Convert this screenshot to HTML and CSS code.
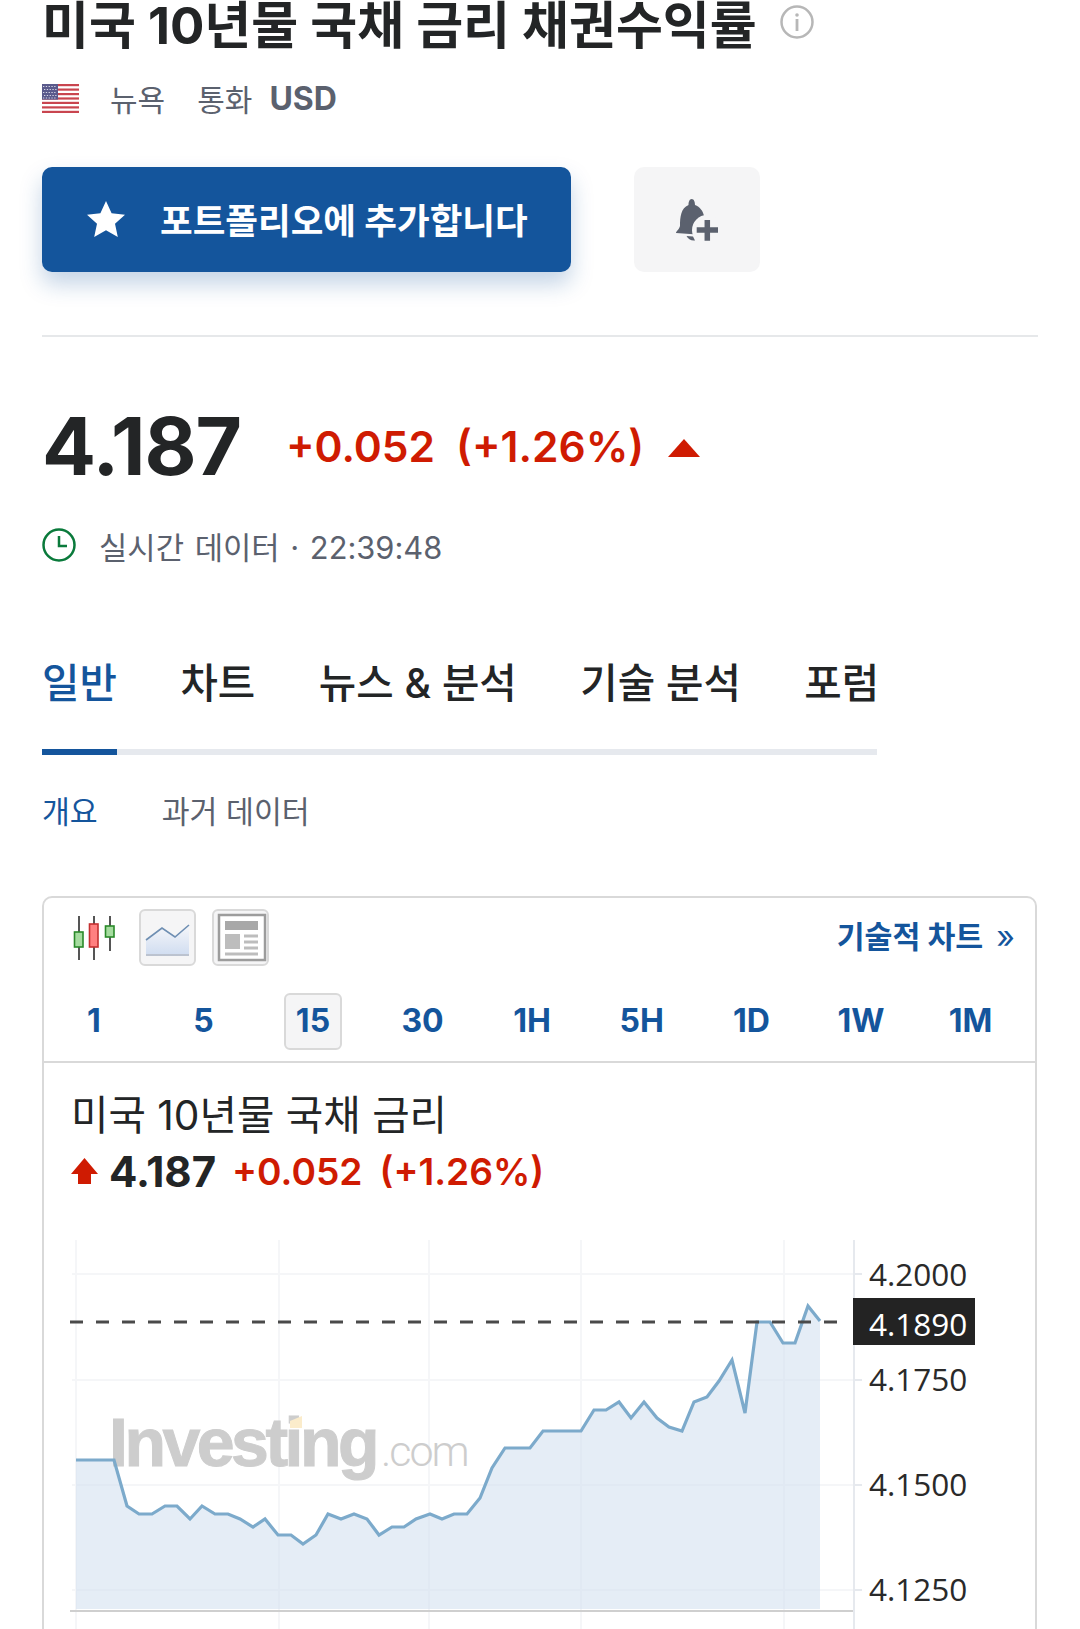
FILE: index.html
```html
<!DOCTYPE html>
<html lang="ko">
<head>
    <meta charset="UTF-8">
    <meta name="viewport" content="width=device-width, initial-scale=1.0">
    <title>미국 10년물 국채 금리 채권수익률</title>
    <link rel="stylesheet" href="styles.css">
</head>
<body>
    <div class="page">
        <div class="title-row">
            <h1>미국 10년물 국채 금리 채권수익률</h1>
            <svg class="info-icon" viewBox="0 0 34 34">
                <circle cx="17" cy="17" r="15.5" fill="none" stroke="#b7b7b7" stroke-width="2.5"/>
                <circle cx="17" cy="10" r="1.8" fill="#b7b7b7"/>
                <rect x="15.6" y="14" width="2.8" height="12" fill="#b7b7b7"/>
            </svg>
        </div>

        <div class="meta-row">
            <svg class="flag" viewBox="0 0 37 29">
                <rect width="37" height="29" fill="#fff"/>
                <g fill="#c9454f">
                    <rect y="0" width="37" height="2.2"/>
                    <rect y="4.5" width="37" height="2.2"/>
                    <rect y="9" width="37" height="2.2"/>
                    <rect y="13.4" width="37" height="2.2"/>
                    <rect y="17.8" width="37" height="2.2"/>
                    <rect y="22.3" width="37" height="2.2"/>
                    <rect y="26.8" width="37" height="2.2"/>
                </g>
                <rect width="16" height="15.6" fill="#5a5a8c"/>
                <path d="M1 2.5h14M2 5.5h13M1 8.5h14M2 11.5h13M1 14h14" stroke="#d8d8e6" stroke-width="1.2" stroke-dasharray="1.3 1.5"/>
            </svg>
            <span class="meta-city">뉴욕</span>
            <span class="meta-label">통화</span>
            <strong class="meta-currency">USD</strong>
        </div>

        <div class="action-row">
            <button class="add-btn">
                <svg class="star-icon" viewBox="0 0 38 37">
                    <path d="M19 0l5.6 12.2 13.4 1.5-10 9 2.8 13.3L19 29.3 7.2 36l2.8-13.3-10-9 13.4-1.5z" fill="#fff"/>
                </svg>
                <span class="add-label">포트폴리오에 추가합니다</span>
            </button>
            <button class="alert-btn">
                <svg class="bell-icon" viewBox="0 0 42 42">
                    <path d="M15.7 0C18 0 19 3 19 6c5 2 8 6 9 11v19L0 34c0-2 3-3 4-7C4 18 5 9 12.5 6c0-3 1-6 3.200-6z" fill="#5b616e"/>
                    <circle cx="31" cy="31" r="15" fill="#f5f5f6"/>
                    <path d="M10.500 37l6.500.5 2 4c-4 .5-7-1.500-8.500-4.500z" fill="#5b616e"/>
                    <path d="M31.300 21v20.700M20.700 31h21.300" stroke="#5b616e" stroke-width="5.500"/>
                </svg>
            </button>
        </div>

        <hr class="divider">

        <div class="price-row">
            <span class="price">4.187</span>
            <span class="change">+0.052</span>
            <span class="change change-pct">(+1.26%)</span>
            <svg class="up-icon" viewBox="0 0 32 18"><path d="M16 0l16 18H0z" fill="#cf1b02"/></svg>
        </div>

        <div class="time-row">
            <svg class="clock-icon" viewBox="0 0 34 34">
                <circle cx="17" cy="17" r="15.5" fill="none" stroke="#0a7a3b" stroke-width="2.5"/>
                <path d="M17 8v10h8" fill="none" stroke="#0a7a3b" stroke-width="2.5"/>
            </svg>
            <span>실시간 데이터 · 22:39:48</span>
        </div>

        <nav class="tabs">
            <a class="tab active">일반</a>
            <a class="tab">차트</a>
            <a class="tab">뉴스 &amp; 분석</a>
            <a class="tab">기술 분석</a>
            <a class="tab">포럼</a>
        </nav>

        <div class="sub-tabs">
            <a class="sub-tab active">개요</a>
            <a class="sub-tab">과거 데이터</a>
        </div>

        <section class="chart-card">
            <div class="chart-tools">
                <div class="tool-group">
                    <svg class="candle-icon" viewBox="0 0 43 44">
                        <path d="M6 0v44M21 0v44M37 0v35" stroke="#555" stroke-width="2"/>
                        <rect x="1.5" y="16" width="8.5" height="15" fill="#a5dc9f" stroke="#2a8a2a" stroke-width="1.6"/>
                        <rect x="16.5" y="8" width="8.5" height="23" fill="#ff8080" stroke="#c43030" stroke-width="1.6"/>
                        <rect x="32.5" y="10" width="8.5" height="11" fill="#a5dc9f" stroke="#2a8a2a" stroke-width="1.6"/>
                    </svg>
                    <span class="tool-btn">
                        <svg viewBox="0 0 53 53">
                            <defs>
                                <linearGradient id="toolFill" x1="0" y1="0" x2="0" y2="1">
                                    <stop offset="0" stop-color="#f6f7fa"/>
                                    <stop offset="1" stop-color="#cfdcf0"/>
                                </linearGradient>
                            </defs>
                            <path d="M5 29l16-12 13 9 14-12v31H5z" fill="url(#toolFill)"/>
                            <path d="M5 29l16-12 13 9 14-12" fill="none" stroke="#6f8fb3" stroke-width="1.6"/>
                            <path d="M5 44h43" stroke="#b4bac4" stroke-width="1.6"/>
                        </svg>
                    </span>
                    <span class="tool-btn">
                        <svg viewBox="0 0 53 53">
                            <rect x="5" y="4" width="46" height="45" fill="#fff" stroke="#9c9c9c" stroke-width="2.5"/>
                            <rect x="11" y="10" width="33" height="9" fill="#a8a8a8"/>
                            <rect x="11" y="23" width="15" height="15" fill="#bdbdbd"/>
                            <path d="M30 25h14M30 31h14M30 37h14M11 43h33" stroke="#bdbdbd" stroke-width="3"/>
                        </svg>
                    </span>
                </div>
                <a class="tech-link">기술적 차트 <span class="tech-arrows">»</span></a>
            </div>

            <div class="intervals">
                <a class="interval">1</a>
                <a class="interval">5</a>
                <a class="interval selected">15</a>
                <a class="interval">30</a>
                <a class="interval">1H</a>
                <a class="interval">5H</a>
                <a class="interval">1D</a>
                <a class="interval">1W</a>
                <a class="interval">1M</a>
            </div>

            <div class="chart-body">
                <h2 class="chart-title">미국 10년물 국채 금리</h2>
                <div class="quote-row">
                    <svg class="quote-arrow" viewBox="0 0 27 26"><path d="M13.500 0L27 16h-7v10H7V16H0z" fill="#cf1b02"/></svg>
                    <span class="quote-price">4.187</span>
                    <span class="quote-change">+0.052</span>
                    <span class="quote-change quote-pct">(+1.26%)</span>
                </div>
            </div>

            <!-- viewBox uses page coordinates so points can be read off the screenshot -->
            <svg class="chart" viewBox="44 1230 991 420">
                <g class="grid">
                    <path d="M72 1273H854M72 1379H854M72 1484H854M72 1589H854"/>
                    <path d="M76 1239V1650M279 1239V1650M429 1239V1650M581 1239V1650M784 1239V1650"/>
                </g>
                <polygon class="area" points="76,1608 76,1459 114,1459 127,1505 139,1513 152,1513 165,1505 177,1505 190,1518 202,1505 215,1513 228,1513 240,1518 253,1526 265,1518 278,1534 291,1534 303,1543 316,1534 328,1513 341,1518 354,1513 367,1518 379,1534 392,1526 404,1526 416,1518 430,1513 442,1518 454,1513 467,1513 480,1497 492,1467 505,1447 530,1447 543,1430 581,1430 594,1409 606,1409 619,1401 631,1417 644,1401 657,1417 669,1426 682,1430 694,1401 707,1396 719,1380 732,1359 745,1412 757,1321 770,1321 783,1342 795,1342 808,1305 820,1320 820,1608"/>
                <text class="logo-main" x="109" y="1465">Investing</text>
                <polygon class="logo-tick" points="290,1420 302,1415 302,1427 290,1427"/>
                <text class="logo-com" x="381" y="1465">.com</text>
                <polyline class="line" points="76,1459 114,1459 127,1505 139,1513 152,1513 165,1505 177,1505 190,1518 202,1505 215,1513 228,1513 240,1518 253,1526 265,1518 278,1534 291,1534 303,1543 316,1534 328,1513 341,1518 354,1513 367,1518 379,1534 392,1526 404,1526 416,1518 430,1513 442,1518 454,1513 467,1513 480,1497 492,1467 505,1447 530,1447 543,1430 581,1430 594,1409 606,1409 619,1401 631,1417 644,1401 657,1417 669,1426 682,1430 694,1401 707,1396 719,1380 732,1359 745,1412 757,1321 770,1321 783,1342 795,1342 808,1305 820,1320"/>
                <path class="last-line" d="M70 1321H846"/>
                <path class="x-axis" d="M70 1610H853"/>
                <path class="y-axis" d="M854 1239V1650"/>
                <path class="y-ticks" d="M854 1273H862M854 1379H862M854 1484H862M854 1589H862"/>
                <text class="axis-label" x="869" y="1285">4.2000</text>
                <text class="axis-label" x="869" y="1390">4.1750</text>
                <text class="axis-label" x="869" y="1495">4.1500</text>
                <text class="axis-label" x="869" y="1600">4.1250</text>
                <rect class="last-box" x="853" y="1297" width="122" height="47"/>
                <text class="axis-label last-label" x="869" y="1335">4.1890</text>
            </svg>
        </section>
    </div>
</body>
</html>
```

FILE: styles.css
```css
html, body {
    margin: 0;
    padding: 0;
    height: 1629px;
    overflow: hidden;
    background: #fff;
}
body {
    font-family: Inter, "Noto Sans CJK KR", sans-serif;
    color: #232526;
}
.page {
    padding: 0 42px;
}
.title-row {
    display: flex;
    align-items: center;
    height: 52px;
}
h1 {
    margin: 0;
    font-size: 51px;
    line-height: 52px;
    font-weight: 700;
    white-space: nowrap;
}
.info-icon {
    width: 34px;
    height: 34px;
    margin-left: 23px;
    margin-top: -8px;
}
.meta-row {
    display: flex;
    align-items: center;
    height: 40px;
    margin-top: 26px;
    font-size: 30px;
    color: #5b616e;
}
.flag {
    width: 37px;
    height: 29px;
}
.meta-city {
    margin-left: 31px;
}
.meta-label {
    margin-left: 32px;
}
.meta-currency {
    margin-left: 17px;
    font-size: 32px;
    font-weight: 700;
}
.action-row {
    display: flex;
    gap: 63px;
    margin-top: 49px;
}
.add-btn {
    display: flex;
    align-items: center;
    width: 529px;
    height: 105px;
    padding: 0 0 0 45px;
    border: none;
    border-radius: 10px;
    background-color: #14559c;
    color: #fff;
    font-family: inherit;
    font-size: 35.5px;
    font-weight: 700;
    box-shadow: 0 12px 22px rgba(20, 85, 156, 0.25);
}
.star-icon {
    width: 38px;
    height: 37px;
    margin-right: 35px;
}
.add-label {
    margin-top: -3px;
}
.alert-btn {
    display: flex;
    align-items: center;
    justify-content: center;
    width: 126px;
    height: 105px;
    border: none;
    border-radius: 10px;
    background-color: #f5f5f6;
}
.bell-icon {
    width: 42px;
    height: 42px;
}
.divider {
    height: 2px;
    margin: 63px 0 0;
    border: none;
    background-color: #e6e8ea;
}
.price-row {
    display: flex;
    align-items: center;
    height: 80px;
    margin-top: 69px;
    color: #cf1b02;
}
.price {
    color: #232526;
    font-size: 80px;
    font-weight: 700;
    letter-spacing: -1px;
    line-height: 80px;
}
.change {
    margin-left: 45px;
    font-size: 42.5px;
    font-weight: 600;
}
.change-pct {
    margin-left: 21px;
}
.up-icon {
    width: 32px;
    height: 18px;
    margin: 3px 0 0 24px;
}
.time-row {
    display: flex;
    align-items: center;
    height: 40px;
    margin-top: 39px;
    font-size: 30.8px;
    word-spacing: 2px;
    color: #5b616e;
}
.clock-icon {
    width: 34px;
    height: 34px;
    margin-right: 23px;
}
.tabs {
    display: flex;
    gap: 63.5px;
    width: 835px;
    margin-top: 95px;
    padding-bottom: 41px;
    border-bottom: 6px solid #e6e9ee;
    font-size: 40.7px;
    font-weight: 500;
    line-height: 48px;
}
.tab {
    position: relative;
    white-space: nowrap;
}
.tab.active {
    color: #14559c;
}
.tab.active::after {
    content: "";
    position: absolute;
    left: 0;
    right: 0;
    bottom: -47px;
    height: 6px;
    background-color: #14559c;
}
.sub-tabs {
    display: flex;
    gap: 64px;
    margin-top: 37px;
    font-size: 30.3px;
    line-height: 40px;
    color: #5b616e;
}
.sub-tab.active {
    color: #14559c;
}
.chart-card {
    margin-top: 64px;
    width: 995px;
    box-sizing: border-box;
    border: 2px solid #d9d9d9;
    border-radius: 10px;
}
.chart-tools {
    display: flex;
    align-items: center;
    justify-content: space-between;
    padding: 11px 20px 0 29px;
}
.tool-group {
    display: flex;
    align-items: center;
}
.candle-icon {
    width: 43px;
    height: 44px;
    margin-right: 23px;
}
.tool-btn {
    display: flex;
    width: 57px;
    height: 57px;
    margin-right: 16px;
    box-sizing: border-box;
    border: 2px solid #d9d9d9;
    border-radius: 6px;
    background-color: #f5f5f6;
}
.tool-btn svg {
    width: 53px;
    height: 53px;
}
.tech-link {
    color: #14559c;
    font-size: 30.3px;
    font-weight: 700;
    margin-top: -5px;
}
.tech-arrows {
    margin-left: 6px;
    font-weight: 400;
    font-size: 32px;
}
.intervals {
    display: grid;
    grid-template-columns: repeat(9, 109.6px);
    margin: 27px 0 0 -5px;
    padding-bottom: 11px;
    color: #14559c;
    font-size: 32px;
    font-weight: 700;
}
.interval {
    justify-self: center;
    box-sizing: border-box;
    height: 57px;
    min-width: 58px;
    border: 2px solid transparent;
    line-height: 51px;
    text-align: center;
}
.interval.selected {
    border-color: #d9d9d9;
    border-radius: 6px;
    background-color: #f5f5f6;
}
.chart-body {
    border-top: 2px solid #d9d9d9;
    padding: 28px 0 0 27px;
}
.chart-title {
    margin: 0;
    font-size: 40.7px;
    font-weight: 400;
    line-height: 50px;
}
.quote-row {
    display: flex;
    align-items: center;
    height: 50px;
    margin-top: 5px;
    color: #cf1b02;
}
.quote-arrow {
    width: 27px;
    height: 26px;
}
.quote-price {
    margin-left: 11px;
    color: #232526;
    font-size: 42px;
    font-weight: 700;
}
.quote-change {
    margin-left: 16px;
    font-size: 37.2px;
    font-weight: 600;
}
.quote-pct {
    margin-left: 17px;
}
.chart {
    display: block;
    width: 991px;
    height: 420px;
    margin-top: 35px;
}
.grid path {
    fill: none;
    stroke: #f5f6f8;
    stroke-width: 2;
}
.area {
    fill: #cfdfee;
    opacity: 0.55;
}
.line {
    fill: none;
    stroke: #7caacb;
    stroke-width: 3.2;
}
.last-line {
    stroke: #4a4a4a;
    stroke-width: 3;
    stroke-dasharray: 13 13;
}
.x-axis {
    stroke: #cfcfcf;
    stroke-width: 2;
}
.y-axis, .y-ticks {
    stroke: #e6e9ee;
    stroke-width: 2;
}
.axis-label {
    font-family: "Open Sans", sans-serif;
    font-size: 31.5px;
    fill: #2a2a2a;
}
.last-box {
    fill: #232323;
}
.last-label {
    fill: #fff;
}
.logo-main {
    font-family: "Liberation Sans", sans-serif;
    font-size: 68px;
    font-weight: 700;
    letter-spacing: -3.5px;
    fill: #cdcdcd;
    stroke: #cdcdcd;
    stroke-width: 1;
}
.logo-com {
    font-family: Roboto, sans-serif;
    font-size: 43px;
    font-weight: 300;
    letter-spacing: -2px;
    fill: #cdcdcd;
}
.logo-tick {
    fill: #fbeccb;
}
```
